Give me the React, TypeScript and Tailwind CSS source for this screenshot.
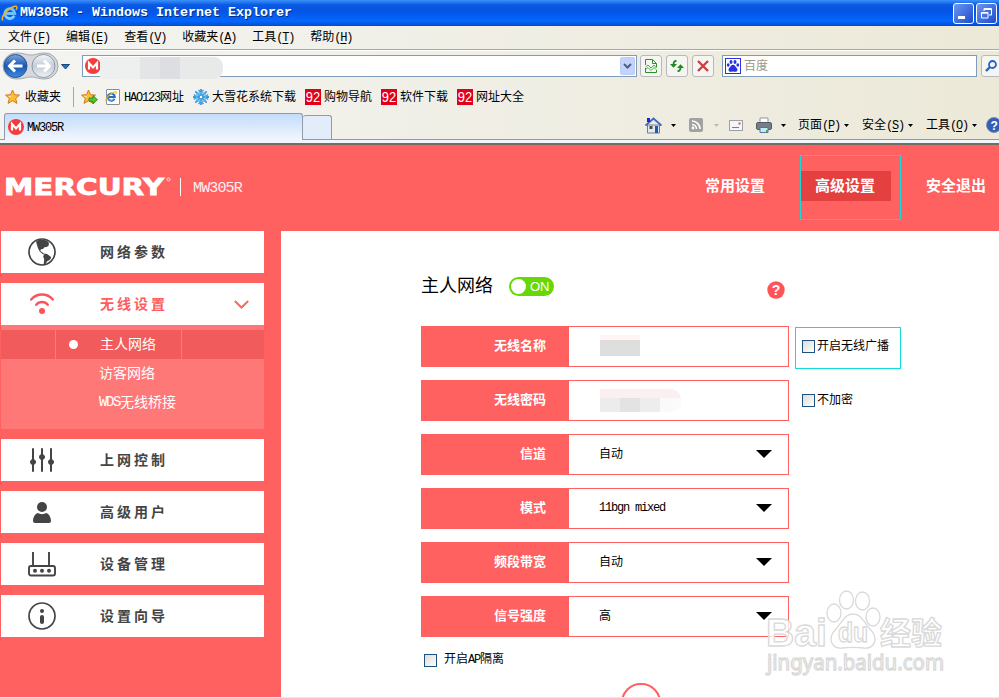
import { ReactNode } from "react";

const Latin = ({ children }: { children: ReactNode }) => (
  <span className="font-['Liberation_Mono',monospace] tracking-[-1.2px]">{children}</span>
);

const MenuLabel = ({ text, k }: { text: string; k: string }) => (
  <span className="whitespace-nowrap">
    {text}
    <Latin>
      (<span className="underline underline-offset-2">{k}</span>)
    </Latin>
  </span>
);

const IeIcon = ({ size, light }: { size: number; light?: boolean }) => (
  <svg width={size} height={size} viewBox="0 0 16 16" fill="none" className="shrink-0">
    <path d="M12.5 10.3A4.7 4.7 0 1 1 13 8H4.5" stroke={light ? "#6fc0f7" : "#1c6fc4"} strokeWidth="2.7" />
    <path d="M12 9.9A4.4 4.4 0 0 1 4 10" stroke="#b4e2fb" strokeWidth=".8" />
    <path d="M2 14.5C-1 12 6 3 13 1.2c3-.5 2 2 1.2 3.4" stroke="#f0b429" strokeWidth="1.4" />
  </svg>
);

const MercuryIcon = () => (
  <svg width="16" height="16" viewBox="0 0 16 16" className="shrink-0">
    <circle cx="8" cy="8" r="8" fill="#f43c3c" />
    <path d="M4 11.5V5l4 4.4L12 5v6.5" fill="none" stroke="#fff" strokeWidth="2.2" />
  </svg>
);

const Star = ({ arrow }: { arrow?: boolean }) => (
  <svg width="17" height="16" viewBox="0 0 17 16" className="shrink-0">
    <path d="M7.5 1l2 4.7 5 .4-3.8 3.3 1.2 5-4.4-2.7-4.4 2.7 1.2-5L.5 6.1l5-.4z" fill="#fbbd36" stroke="#d87b13" strokeLinejoin="round" />
    <path d="M7.5 3.5L6 7l-3.5.2 3 1.4" fill="#ffe9a0" />
    {arrow && <path d="M8 9h4V6.5l4.5 4.2-4.5 4.2v-2.6H8z" fill="#4fc62e" stroke="#24861a" strokeWidth=".8" />}
  </svg>
);

const Snow = () => (
  <svg width="16" height="16" viewBox="0 0 16 16" fill="none" stroke="#3c9ade" className="shrink-0">
    <path d="M8 0v16M0 8h16M2.3 2.3l11.4 11.4M13.7 2.3L2.3 13.7" strokeWidth="1.8" />
    <path d="M5.5 1L8 3.5 10.5 1M5.5 15L8 12.5l2.5 2.5M1 5.5L3.5 8 1 10.5M15 5.5L12.5 8l2.5 2.5" strokeWidth="1.3" />
    <circle cx="8" cy="8" r="4.500" stroke="#5fb4ea" strokeWidth="1.500" />
    <circle cx="8" cy="8" r="1.200" fill="#fff" stroke="none" />
  </svg>
);

const Ninety = () => (
  <svg width="16" height="16" viewBox="0 0 16 16" className="shrink-0">
    <rect width="16" height="16" fill="#e0001b" />
    <text x="0.8" y="13" fontSize="14" textLength="14.4" lengthAdjust="spacingAndGlyphs" fill="#fff" fontFamily="Liberation Sans, sans-serif">92</text>
  </svg>
);

const Paw = () => (
  <svg width="16" height="16" viewBox="0 0 16 16" className="shrink-0">
    <rect x=".5" y=".5" width="15" height="15" fill="#fff" stroke="#2932e1" />
    <g fill="#2932e1">
      <ellipse cx="6" cy="4" rx="1.5" ry="2" />
      <ellipse cx="10" cy="4" rx="1.5" ry="2" />
      <ellipse cx="3.2" cy="7" rx="1.4" ry="1.8" />
      <ellipse cx="12.8" cy="7" rx="1.4" ry="1.8" />
      <path d="M8 6.800c1.800 0 2.300 1.900 3.500 2.900 1.600 1.300 1.200 4-1 4-1 0-1.500-.3-2.500-.3s-1.500.3-2.500.3c-2.200 0-2.600-2.700-1-4C5.700 8.700 6.200 6.800 8 6.800z" />
    </g>
  </svg>
);

const Caret = ({ className = "" }: { className?: string }) => (
  <svg width="5" height="3" viewBox="0 0 5 3" className={`shrink-0 ${className}`}>
    <path d="M0 0h5L2.500 3z" fill="currentColor" />
  </svg>
);

const NavButtons = () => (
  <svg width="72" height="28" viewBox="0 0 72 28" className="shrink-0">
    <defs>
      <linearGradient id="back" x1="0" y1="0" x2="0" y2="1">
        <stop offset="0" stopColor="#7ba7dc" />
        <stop offset=".5" stopColor="#1d56b0" />
        <stop offset="1" stopColor="#3d8be0" />
      </linearGradient>
      <linearGradient id="fwd" x1="0" y1="0" x2="0" y2="1">
        <stop offset="0" stopColor="#f4f6f9" />
        <stop offset=".5" stopColor="#c4ccd8" />
        <stop offset="1" stopColor="#eef2f6" />
      </linearGradient>
    </defs>
    <path d="M14 1C22 1 24 3 29 3S36 1 43 1a13 13 0 0 1 0 26c-7 0-9-2-14-2s-7 2-15 2A13 13 0 0 1 14 1z" fill="#d5d8dc" stroke="#a5a9ae" />
    <circle cx="13.500" cy="14" r="11.500" fill="url(#back)" stroke="#24559c" />
    <circle cx="41.500" cy="14" r="11.500" fill="url(#fwd)" stroke="#8e98a6" />
    <path d="M20.500 14H8.500M13 8.500L7.500 14l5.500 5.500" stroke="#fff" strokeWidth="3" fill="none" />
    <path d="M35 14h12M42 8.500l5.500 5.500-5.500 5.500" stroke="#fff" strokeWidth="3" fill="none" />
    <path d="M59.500 12.500h8L63.500 17z" fill="#2475b8" stroke="#174a80" />
  </svg>
);

const ToolButton = ({ children }: { children: ReactNode }) => (
  <div className="flex h-[22px] w-[22px] shrink-0 items-center justify-center rounded-[3px] border border-[#b6b8bb] bg-[#f5f5f2]">{children}</div>
);

const TitleBar = () => (
  <div className="flex h-[26px] items-center bg-[linear-gradient(#3b92fb_0,#0a59e2_5px,#0455e6_12px,#0368fd_21px,#034ad0_26px)] pl-[1px]">
    <IeIcon size={17} light />
    <span className="ml-[2px] whitespace-pre font-['Liberation_Mono',monospace] text-[13.33px] leading-none font-bold text-white [text-shadow:1px_1px_#0a2a7a]">
      MW305R - Windows Internet Explorer
    </span>
    <div className="mr-[2px] ml-auto flex gap-[2px]">
      <div className="flex h-[21px] w-[21px] rounded-[3px] border border-white bg-linear-to-br from-[#6d97f2] to-[#1d49cb]">
        <div className="mt-[12px] ml-[4px] h-[3px] w-[7px] bg-white" />
      </div>
      <div className="flex h-[21px] w-[21px] items-center justify-center rounded-[3px] border border-white bg-linear-to-br from-[#6d97f2] to-[#1d49cb]">
        <svg width="11" height="11" viewBox="0 0 11 11" fill="none" stroke="#fff">
          <path d="M3 3V.5h7.500V7H8M3 1.500h7.500" />
          <path d="M.5 4.500H7v5.500H.5zM.5 5.200H7" />
        </svg>
      </div>
    </div>
  </div>
);

const menus = [
  ["文件", "F"],
  ["编辑", "E"],
  ["查看", "V"],
  ["收藏夹", "A"],
  ["工具", "T"],
  ["帮助", "H"],
];

const AddressRow = () => (
  <div className="flex h-[32px] items-center pl-[2px]">
    <NavButtons />
    <div className="ml-[8px] flex h-[22px] w-[555px] shrink-0 items-center border border-[#7f9db9] bg-white pr-[1px] pl-[2px]">
      <MercuryIcon />
      <div className="relative mt-[3px] ml-[-1px] flex h-[22px] w-[123px] overflow-hidden rounded-r-[9px]">
        <div className="w-[40px] bg-[#eeefef]" />
        <div className="w-[20px] bg-[#e3e5e7]" />
        <div className="w-[20px] bg-[#dcdee1]" />
        <div className="w-[43px] bg-[#e8eaea]" />
      </div>
      <div className="ml-auto flex h-[18px] w-[15px] items-center justify-center rounded-[2px] border border-[#bccdf5] bg-[#c3d3fb]">
        <svg width="9" height="6" viewBox="0 0 9 6">
          <path d="M1 1l3.500 3.500L8 1" fill="none" stroke="#4d6185" strokeWidth="2" />
        </svg>
      </div>
    </div>
    <div className="ml-[3px] flex gap-[4px]">
      <ToolButton>
        <svg width="12" height="14" viewBox="0 0 12 14" fill="none" stroke="#289428">
          <path d="M.5 6V.5h7l4 4V8M7.500.5v4h4M.5 9v4.500h11V11" />
          <path d="M.5 8L3 6l3 3 3-3 2.500 3M.5 10.500L3 8.500l3 3 3-3 2 2" strokeWidth=".8" />
        </svg>
      </ToolButton>
      <ToolButton>
        <svg width="14" height="12" viewBox="0 0 14 12" className="shrink-0" fill="none" stroke="#208a20" strokeWidth="1.800">
          <path d="M6.500 .8C4.500 .8 3.500 2 3.500 5M7.500 11.200c2 0 3-1.200 3-4.200" />
          <path d="M0 4h7L3.500 7.800zM7 8h7l-3.500-3.800z" fill="#208a20" stroke="none" />
        </svg>
      </ToolButton>
      <ToolButton>
        <svg width="12" height="12" viewBox="0 0 12 12" stroke="#cd3f3f" strokeWidth="2.4">
          <path d="M1 1l10 10M11 1L1 11" />
        </svg>
      </ToolButton>
    </div>
    <div className="ml-[8px] flex h-[22px] w-[255px] shrink-0 items-center border border-[#7f9db9] bg-white pl-[2px] text-[#9b978c]">
      <Paw />
      <span className="ml-[3px]">百度</span>
    </div>
    <div className="ml-[4px] flex h-[22px] w-[30px] shrink-0 items-center rounded-[3px] border border-[#b6b8bb] bg-[#f5f5f2] pl-[3px]">
      <svg width="12" height="12" viewBox="0 0 12 12" fill="none" stroke="#2263c5">
        <circle cx="7.5" cy="4.5" r="3.5" strokeWidth="1.8" />
        <path d="M5 7L1 11" strokeWidth="2.4" />
      </svg>
    </div>
  </div>
);

const FavoritesRow = () => (
  <div className="flex h-[30px] items-center whitespace-nowrap pl-[5px]">
    <Star />
    <span className="ml-[3px] w-[36px]">收藏夹</span>
    <div className="ml-[12px] h-[20px] w-px bg-[#aca899]" />
    <div className="ml-[7px]">
      <Star arrow />
    </div>
    <div className="ml-[8px] flex h-[16px] w-[14px] items-center rounded-[1px] border border-[#8b8f94] bg-white">
      <div className="relative left-[-2px]">
        <IeIcon size={12} />
      </div>
    </div>
    <span className="ml-[4px] w-[60px]">
      <Latin>HAO123</Latin>网址
    </span>
    <div className="ml-[9px]">
      <Snow />
    </div>
    <span className="ml-[3px] w-[84px]">大雪花系统下载</span>
    <div className="ml-[9px] flex items-center gap-[9px]">
      {["购物导航", "软件下载", "网址大全"].map((t) => (
        <div key={t} className="flex items-center gap-[3px]">
          <Ninety />
          <span>{t}</span>
        </div>
      ))}
    </div>
  </div>
);

const TabRow = () => (
  <div className="flex h-[28px] items-end border-b border-[#919b9c] pl-[4px]">
    <div className="mb-[-1px] flex h-[27px] w-[299px] shrink-0 items-center rounded-t-[3px] border border-b-0 border-[#919ba8] bg-linear-to-b from-[#c3dcfb] to-[#f1f6fd] pl-[3px]">
      <MercuryIcon />
      <span className="ml-[3px]">
        <Latin>MW305R</Latin>
      </span>
    </div>
    <div className="h-[24px] w-[29px] shrink-0 rounded-t-[3px] border border-b-0 border-l-0 border-[#919ba8] bg-[#e3edf9]" />
    <div className="mb-[4px] ml-[313px] flex h-[20px] shrink-0 items-center whitespace-nowrap">
      <svg width="17" height="17" viewBox="0 0 17 17">
        <path d="M2.500 8h12v8h-12z" fill="#e4e9f1" stroke="#687da0" />
        <path d="M.5 8.500L8.500 1.500l8 7" fill="none" stroke="#4266bb" strokeWidth="1.8" />
        <path d="M2 1h3v4H2z" fill="#1b2cc0" />
        <path d="M10 9h3v7h-3z" fill="#2458a5" />
        <path d="M4.500 9h3v3h-3z" fill="#4a4a4a" />
      </svg>
      <Caret className="ml-[9px]" />
      <svg width="14" height="14" viewBox="0 0 14 14" className="ml-[13px]" fill="none" stroke="#fff" strokeWidth="1.6">
        <rect width="14" height="14" rx="2" fill="#a2a2a0" stroke="none" />
        <path d="M3 6.500A4.500 4.500 0 0 1 7.500 11M3 3a8 8 0 0 1 8 8" />
        <circle cx="4" cy="10" r=".6" />
      </svg>
      <Caret className="ml-[11px] text-[#bcbab0]" />
      <svg width="14" height="11" viewBox="0 0 14 11" className="ml-[10px]">
        <rect x=".5" y=".5" width="13" height="10" fill="#f5f5f7" stroke="#9ba0aa" />
        <path d="M9.500 2.500h2v2h-2zM3 7h7v1H3z" fill="#d75a50" />
      </svg>
      <svg width="16" height="16" viewBox="0 0 16 16" className="ml-[13px]">
        <path d="M4 1h8v5H4z" fill="#fff" stroke="#8b95a4" />
        <rect x=".5" y="5.5" width="15" height="7" rx="1.5" fill="#777e8a" stroke="#555c66" />
        <path d="M4 10.500h8v5H4z" fill="#c8e8fb" stroke="#55779a" />
        <path d="M10 13h2v2h-2z" fill="#3bb44a" />
      </svg>
      <Caret className="ml-[9px]" />
      <div className="ml-[12px] flex gap-[12px]">
        {[
          ["页面", "P"],
          ["安全", "S"],
          ["工具", "O"],
        ].map(([t, k]) => (
          <div key={k} className="flex w-[52px] items-center">
            <MenuLabel text={t} k={k} />
            <Caret className="ml-[4px]" />
          </div>
        ))}
      </div>
      <svg width="16" height="16" viewBox="0 0 16 16" className="ml-[8px]">
        <circle cx="8" cy="8" r="7.5" fill="#2f5fb8" stroke="#8390a5" />
        <text x="4.5" y="12.5" fontSize="12" fontWeight="bold" fill="#fff" fontFamily="Liberation Sans, sans-serif">?</text>
      </svg>
    </div>
  </div>
);

const Globe = () => (
  <svg width="28" height="28" viewBox="0 0 28 28">
    <circle cx="14" cy="14" r="13" fill="#fff" stroke="#444" strokeWidth="1.7" />
    <path d="M8 3.500L12 1.200l7 1.200 2 2.600-.5 3-2 1-2 .2L15 11l-2 .3-.7 1.700 2.700 1.800 1.200 1.200-1 .5-3.500-2.900-1.800-3.700L9 7z" fill="#444" />
    <path d="M16.500 15.500l3 .8 3.800 2.900-1.300 2.600-2.800 1.400-2 3.200h-1.500l.5-5-1-3z" fill="#444" />
  </svg>
);

const Wifi = () => (
  <svg width="28" height="28" viewBox="0 0 28 28" fill="none" stroke="#fd5358" strokeLinecap="round">
    <path d="M3.200 9.500C9 2.800 19 2.800 24.800 9.500M8.200 14.800c3.300-3.800 8.300-3.800 11.600 0" strokeWidth="2.4" />
    <circle cx="14" cy="21" r="3" fill="#fd5358" stroke="none" />
  </svg>
);

const Sliders = () => (
  <svg width="28" height="28" viewBox="0 0 28 28" fill="#444" stroke="#444" strokeLinecap="round">
    <path d="M5 3v22M14 3v22M23 3v22" strokeWidth="2" />
    <circle cx="5" cy="16" r="2.5" />
    <circle cx="14" cy="11" r="2.5" />
    <circle cx="23" cy="16" r="2.5" />
  </svg>
);

const Person = () => (
  <svg width="28" height="28" viewBox="0 0 28 28" fill="#444">
    <circle cx="14" cy="9" r="5" />
    <path d="M9.500 15c3 1.500 6 1.500 9 0 2.500 1 4.500 4.500 4.500 8q0 2-2 2H7q-2 0-2-2c0-3.500 2-7 4.500-8z" />
  </svg>
);

const RouterIcon = () => (
  <svg width="28" height="28" viewBox="0 0 28 28" fill="none" stroke="#444" strokeWidth="1.9">
    <path d="M5 2v14M21 2v14" />
    <rect x="1" y="16" width="26" height="9.5" rx="2" />
    <g fill="#444" stroke="none">
      <circle cx="7" cy="20.8" r="2" />
      <circle cx="14" cy="20.8" r="2" />
      <circle cx="21" cy="20.8" r="2" />
    </g>
  </svg>
);

const Info = () => (
  <svg width="28" height="28" viewBox="0 0 28 28" fill="none" stroke="#444">
    <circle cx="14" cy="14" r="13" strokeWidth="1.7" />
    <circle cx="14" cy="9" r="2" fill="#444" stroke="none" />
    <path d="M14 15v5" strokeWidth="4" strokeLinecap="round" />
  </svg>
);

const SideItem = ({ icon, text, active }: { icon: ReactNode; text: string; active?: boolean }) => (
  <div className="flex h-[42px] items-center bg-white pl-[27px]">
    {icon}
    <span className={`mb-px ml-[44px] text-[14px] font-bold tracking-[3px] ${active ? "text-[#ff5c5c]" : "text-[#444]"}`}>{text}</span>
    {active && (
      <svg width="15" height="9" viewBox="0 0 15 9" className="mr-[15px] ml-auto">
        <path d="M.8 1l6.700 6.500L14.200 1" fill="none" stroke="#ff6666" strokeWidth="2" />
      </svg>
    )}
  </div>
);

const Sidebar = () => (
  <aside className="w-[281px] shrink-0 bg-[#ff6060] pr-[17px] pl-px">
    <div className="flex flex-col gap-[10px]">
      <SideItem icon={<Globe />} text="网络参数" />
      <div>
        <SideItem icon={<Wifi />} text="无线设置" active />
        <div className="h-[104px] bg-[#ff7878] pt-[5px] text-[14px] text-white">
          <div className="relative flex h-[29px] items-center bg-[#f25b5b] pl-[68px]">
            <div className="absolute top-[-1px] left-[54px] z-10 h-[35px] w-[127px] border border-[#60bcbc]" />
            <div className="h-[9px] w-[9px] rounded-full bg-white" />
            <span className="mb-[2px] ml-[22px]">主人网络</span>
          </div>
          <div className="flex h-[29px] items-center pb-[2px] pl-[98px]">访客网络</div>
          <div className="flex h-[29px] items-center pb-[2px] pl-[98px]">
            <span className="font-['Liberation_Mono',monospace] tracking-[-1.4px]">WDS</span>无线桥接
          </div>
        </div>
      </div>
      <SideItem icon={<Sliders />} text="上网控制" />
      <SideItem icon={<Person />} text="高级用户" />
      <SideItem icon={<RouterIcon />} text="设备管理" />
      <SideItem icon={<Info />} text="设置向导" />
    </div>
  </aside>
);

const Header = () => (
  <header className="flex h-[86px] shrink-0 items-center bg-[#ff6060] text-white">
    <svg width="168" height="24" viewBox="0 0 168 24" className="mb-[2px] ml-[4px] shrink-0" fill="#fff">
      <text x="0" y="19.5" fontSize="23.5" fontWeight="bold" textLength="160" lengthAdjust="spacingAndGlyphs" fontFamily="DejaVu Sans, sans-serif" stroke="#fff" strokeWidth=".8">MERCURY</text>
      <circle cx="164.5" cy="4.5" r="1.5" fill="none" stroke="#fff" strokeWidth=".8" />
    </svg>
    <div className="mb-[3px] ml-[8px] h-[18px] w-px bg-white" />
    <span className="mt-[2px] ml-[12px] font-['Liberation_Mono',monospace] text-[15px] tracking-[-0.85px] text-white/90">MW305R</span>
    <nav className="mr-[13px] mb-[4px] ml-auto flex items-center text-[15px] font-bold whitespace-nowrap">
      <span>常用设置</span>
      <div className="relative mr-[35px] ml-[35px] bg-[#e44040] pt-[3px] pr-[16px] pb-[3px] pl-[15px] leading-6">
        高级设置
        <div className="absolute top-[-16px] left-0 h-[65px] w-[101px] border border-[#14dcdc]" />
      </div>
      <span>安全退出</span>
    </nav>
  </header>
);

const Check = ({ children, gap = "gap-[2px]" }: { children: ReactNode; gap?: string }) => (
  <label className={`flex items-center whitespace-nowrap ${gap}`}>
    <span className="h-[13px] w-[13px] border border-[#1c5180] bg-linear-to-br from-[#dcdcd7] to-white" />
    <span className="mb-px">{children}</span>
  </label>
);

const Row = ({ label, children }: { label: string; children?: ReactNode }) => (
  <div className="flex h-[41px] w-[368px] shrink-0 border border-[#ff6060]">
    <div className="flex w-[147px] items-center justify-end bg-[#ff6060] pr-[23px] pb-[2px] text-[13px] font-bold text-white">{label}</div>
    <div className="flex flex-1 items-center pb-[2px] pl-[30px]">{children}</div>
  </div>
);

const Arrow = () => (
  <svg width="16" height="8" viewBox="0 0 16 8" className="mr-[16px] ml-auto">
    <path d="M0 0h16L8 8z" />
  </svg>
);

const selects = [
  { label: "信道", value: "自动" },
  { label: "模式", value: "11bgn mixed" },
  { label: "频段带宽", value: "自动" },
  { label: "信号强度", value: "高" },
];

const Watermark = () => (
  <svg width="190" height="92" viewBox="0 0 190 92" className="absolute top-[586px] left-[761px]">
    <g fill="#fff" fillOpacity=".75" stroke="#d9d9d9" strokeWidth="1.3" strokeLinejoin="round" fontWeight="bold">
      <ellipse cx="85.500" cy="14" rx="7" ry="9" />
      <ellipse cx="101.500" cy="15" rx="7" ry="9" />
      <ellipse cx="73" cy="27" rx="7" ry="9" />
      <ellipse cx="112" cy="31" rx="7" ry="9" />
      <path d="M92 28c8 0 10 7 17 15 9 9 5 20-6 19-8-1-14-1-22 0-11 1-15-10-6-19 7-8 9-15 17-15z" />
      <text x="5" y="60" fontSize="38" textLength="61" lengthAdjust="spacingAndGlyphs" fontFamily="Liberation Sans, sans-serif">Bai</text>
      <text x="77" y="56" fontSize="27" textLength="30" lengthAdjust="spacingAndGlyphs" fontFamily="Liberation Sans, sans-serif">du</text>
      <text x="119" y="58" fontSize="31" fontFamily="Noto Sans CJK SC, sans-serif">经验</text>
      <text x="6" y="84" fontSize="21" fontWeight="normal" textLength="177" lengthAdjust="spacingAndGlyphs" fontFamily="Noto Sans, sans-serif">jingyan.baidu.com</text>
    </g>
  </svg>
);

const Main = () => (
  <main className="flex-1 overflow-hidden bg-white pl-[140px]">
    <div className="flex h-[95px] items-center pt-[17px] pb-px">
      <span className="mb-[2px] text-[18px]">主人网络</span>
      <div className="ml-[16px] flex h-[19px] w-[45px] items-center rounded-full bg-[#68d805] pl-[2px]">
        <div className="h-[15px] w-[15px] rounded-full bg-white" />
        <span className="ml-[4px] font-['Liberation_Sans',sans-serif] text-[13px] leading-none text-white">ON</span>
      </div>
      <svg width="18" height="18" viewBox="0 0 18 18" className="mt-[7px] ml-[213px]">
        <circle cx="9" cy="9" r="8.7" fill="#ff5358" />
        <text x="9" y="13.5" fontSize="14" fontWeight="bold" textAnchor="middle" fill="#fff" fontFamily="Liberation Sans, sans-serif">?</text>
      </svg>
    </div>
    <div className="flex flex-col gap-[13px]">
      <div className="flex">
        <Row label="无线名称">
          <div className="mt-[4px] ml-px h-[16px] w-[40px] bg-[#dedede] shadow-[0_-5px_#fff5f5]" />
        </Row>
        <div className="mt-px mb-[-2px] ml-[6px] flex h-[42px] w-[106px] border border-[#14dcdc] pb-[3px] pl-[6px]">
          <Check>开启无线广播</Check>
        </div>
      </div>
      <div className="flex">
        <Row label="无线密码">
          <div className="mt-[2px] ml-px flex h-[23px] w-[81px] overflow-hidden rounded-r-[10px] border-t-[9px] border-[#fceff0]">
            <div className="w-[20px] bg-[#ececec]" />
            <div className="w-[20px] bg-[#e3e3e3]" />
            <div className="w-[20px] bg-[#ededed]" />
            <div className="w-[21px] bg-[#fafafa]" />
          </div>
        </Row>
        <div className="ml-[13px] flex">
          <Check>不加密</Check>
        </div>
      </div>
      {selects.map((s) => (
        <Row key={s.label} label={s.label}>
          {s.value.startsWith("11") ? <Latin>{s.value}</Latin> : <span>{s.value}</span>}
          <Arrow />
        </Row>
      ))}
    </div>
    <div className="mt-[13px] ml-[3px] h-[20px]">
      <Check gap="gap-[7px]">
        开启<Latin>AP</Latin>隔离
      </Check>
    </div>
    <div className="mt-[13px] ml-[200px] h-[39px] w-[40px] rounded-full border-2 border-[#ff6060]" />
  </main>
);

export default function App() {
  return (
    <div className="relative flex h-[698px] w-[999px] flex-col overflow-hidden bg-white font-['Liberation_Sans','Noto_Sans_CJK_SC',sans-serif] text-[12px] leading-[18px] text-black">
      <TitleBar />
      <div className="bg-linear-to-r from-[#f4f4f2] to-[#ece9d8]">
        <div className="flex h-[24px] items-center gap-[16px] border-b border-[#aca899] pl-[8px] shadow-[0_1px_#fff]">
          {menus.map(([t, k]) => (
            <MenuLabel key={k} text={t} k={k} />
          ))}
        </div>
        <AddressRow />
        <FavoritesRow />
        <TabRow />
      </div>
      <div className="h-[5px] shrink-0 border-b-2 border-[#716f64] bg-[#f1f6fd]" />
      <div className="flex h-[552px] shrink-0 flex-col overflow-hidden">
        <Header />
        <div className="flex min-h-0 flex-1">
          <Sidebar />
          <Main />
        </div>
      </div>
      <div className="h-px bg-[#ecece4]" />
      <Watermark />
    </div>
  );
}
